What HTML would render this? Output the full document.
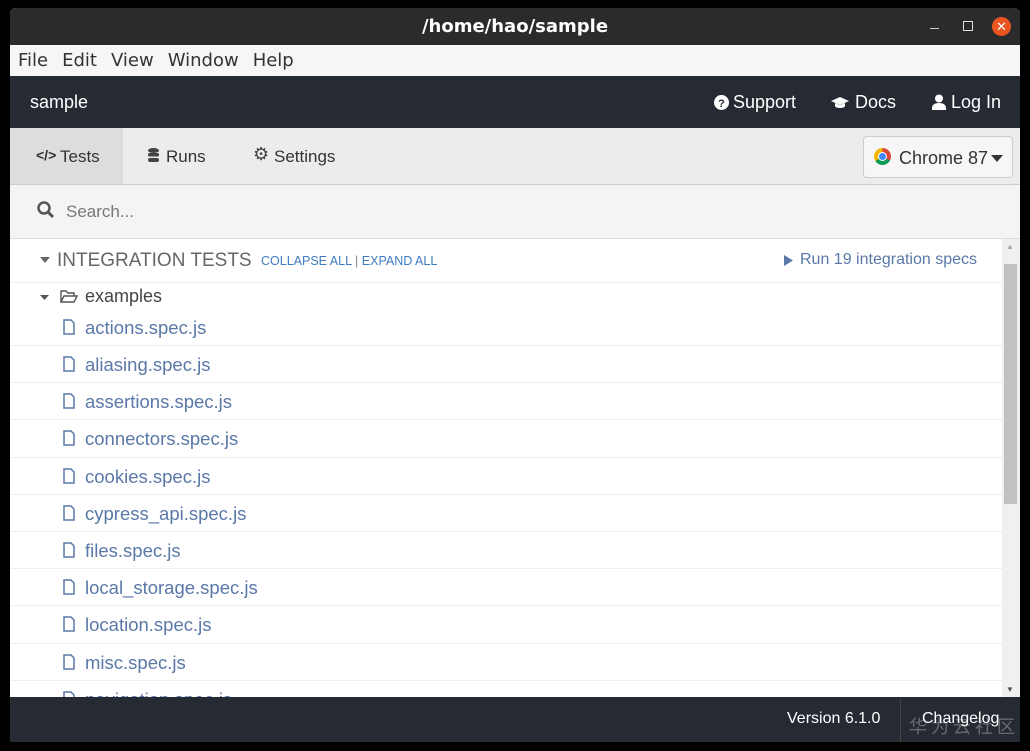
<!DOCTYPE html><html><head><style>
body{margin:0;width:1030px;height:751px;background:#000;font-family:"Liberation Sans",sans-serif;position:relative;overflow:hidden}
.win{position:absolute;left:10px;top:8px;width:1010px;height:734px;background:#fff;border-radius:6px 6px 0 0;overflow:hidden}
.title{height:37px;background:#2b2b2b;color:#fff;font:bold 18px "DejaVu Sans",sans-serif;text-align:center;line-height:37px}
.menu{height:31px;background:#f6f6f6;font:18px "DejaVu Sans",sans-serif;color:#333;line-height:31px;padding-left:8px}
.menu span{margin-right:14px}
.hdr{height:52px;background:#252a33;color:#fff;font-size:18px;line-height:52px;position:relative}
.tabs{height:56px;background:#ececec;border-bottom:1px solid #ccc;position:relative;font-size:17px;color:#333}
.search{height:53px;background:#f4f4f4;border-bottom:1px solid #ddd;position:relative;font-size:17px;color:#777}
.lh{height:43px;border-bottom:1px solid #eee;position:relative;color:#666}
.row{height:36.2px;border-bottom:1px solid #eee;position:relative;font-size:18.5px;color:#5a78a8}
.row span{position:absolute;left:75px;top:8px}
.row svg{position:absolute;left:53px;top:10px}
.foot{position:absolute;left:0;top:689px;width:1010px;height:45px;background:#252a33;color:#fff;font-size:16px}
</style></head><body><div class="win">
<div class="title">/home/hao/sample
<span style="position:absolute;left:920px;top:12px;width:9px;border-top:1px solid #ccc;top:20px"></span>
<span style="position:absolute;left:953px;top:13px;width:8px;height:8px;border:1px solid #ddd"></span>
<span style="position:absolute;left:982px;top:9px;width:19px;height:19px;border-radius:50%;background:#e95420;color:#fff;font:13px sans-serif;line-height:19px">✕</span></div>
<div class="menu"><span>File</span><span>Edit</span><span>View</span><span>Window</span><span>Help</span></div>
<div class="hdr">
<span style="position:absolute;left:20px">sample</span>
<svg style="position:absolute;left:704px;top:19px" width="15" height="15"><circle cx="7.5" cy="7.5" r="7.5" fill="#fff"/><text x="7.5" y="12" font-size="11" font-weight="bold" text-anchor="middle" fill="#252a33" font-family="Liberation Sans">?</text></svg>
<span style="position:absolute;left:723px">Support</span>
<svg style="position:absolute;left:821px;top:20px" width="18" height="13"><path d="M9 1L0 5l9 4 9-4z M4 7v3.5c2 2 8 2 10 0V7l-5 2.3z" fill="#fff"/></svg>
<span style="position:absolute;left:845px">Docs</span>
<svg style="position:absolute;left:922px;top:18px" width="14" height="16"><circle cx="7" cy="4.5" r="4" fill="#fff"/><path d="M0 16v-2c0-3 2.5-5 7-5s7 2 7 5v2z" fill="#fff"/></svg>
<span style="position:absolute;left:941px">Log In</span></div>
<div class="tabs"><div style="position:absolute;left:0;top:0;width:113px;height:56px;background:#ddd"></div>
<span style="position:absolute;left:26px;top:19px;font-weight:bold;font-size:14px">&lt;/&gt;</span><span style="position:absolute;left:50px;top:19px">Tests</span>
<svg style="position:absolute;left:138px;top:20px" width="11" height="14"><ellipse cx="5.5" cy="2.5" rx="5.5" ry="2.5" fill="#444"/><rect x="0" y="5" width="11" height="3.5" rx="1.5" fill="#444"/><rect x="0" y="10" width="11" height="4" rx="2" fill="#444"/></svg>
<span style="position:absolute;left:156px;top:19px">Runs</span>
<span style="position:absolute;left:243px;top:16px;font-size:18px;color:#444">⚙</span><span style="position:absolute;left:264px;top:19px">Settings</span>
<div style="position:absolute;left:853px;top:8px;width:148px;height:40px;background:#f6f6f6;border:1px solid #ccc;border-radius:4px">
<span style="position:absolute;left:10px;top:11px;width:17px;height:17px;border-radius:50%;background:conic-gradient(#db4437 0 33%,#0f9d58 0 66%,#f4b400 0)"></span><span style="position:absolute;left:14px;top:15px;width:7px;height:7px;border-radius:50%;background:#4285f4;border:1.5px solid #fff"></span>
<span style="position:absolute;left:35px;top:11px;font-size:18px">Chrome 87</span><svg style="position:absolute;left:127px;top:18px" width="12" height="7"><path d="M0 0h12L6 7z" fill="#333"/></svg></div></div>
<div class="search"><svg style="position:absolute;left:27px;top:16px" width="18" height="18"><circle cx="7" cy="7" r="5.5" stroke="#555" stroke-width="2.5" fill="none"/><line x1="11" y1="11" x2="16" y2="16" stroke="#555" stroke-width="3"/></svg><span style="position:absolute;left:56px;top:17px">Search...</span></div>
<div style="position:absolute;left:0;top:231px;width:992px">
<div class="lh"><svg style="position:absolute;left:30px;top:18px" width="10" height="6"><path d="M0 0h10L5 6z" fill="#666"/></svg><span style="position:absolute;left:47px;top:11px;font-size:19px">INTEGRATION TESTS</span>
<span style="position:absolute;left:251px;top:15px;font-size:12.5px;color:#3d7bbf">COLLAPSE ALL <span style="color:#888">|</span> EXPAND ALL</span>
<svg style="position:absolute;left:774px;top:16px" width="9" height="11"><path d="M0 0l9 5.5L0 11z" fill="#5a78a8"/></svg>
<span style="position:absolute;left:790px;top:12px;font-size:16px;color:#5a78a8">Run 19 integration specs</span></div>
<div style="height:30px;position:relative;font-size:18px;color:#444"><svg style="position:absolute;left:30px;top:12px" width="9" height="5"><path d="M0 0h9L4.5 5z" fill="#555"/></svg>
<svg style="position:absolute;left:50px;top:7px" width="18" height="13"><path d="M1 12V1h5l2 2h6v3 M1 12l3-6h13l-3 6z" fill="none" stroke="#555" stroke-width="1.4"/></svg><span style="position:absolute;left:75px;top:3px">examples</span></div>
<div class="row" style="height:32px"><svg width="12" height="16" style="top:6px"><path d="M1 1h7l3 3v11H1z" fill="none" stroke="#5a78a8" stroke-width="1.5"/></svg><span style="top:4px">actions.spec.js</span></div>
<div class="row"><svg width="12" height="16"><path d="M1 1h7l3 3v11H1z" fill="none" stroke="#5a78a8" stroke-width="1.5"/></svg><span>aliasing.spec.js</span></div>
<div class="row"><svg width="12" height="16"><path d="M1 1h7l3 3v11H1z" fill="none" stroke="#5a78a8" stroke-width="1.5"/></svg><span>assertions.spec.js</span></div>
<div class="row"><svg width="12" height="16"><path d="M1 1h7l3 3v11H1z" fill="none" stroke="#5a78a8" stroke-width="1.5"/></svg><span>connectors.spec.js</span></div>
<div class="row"><svg width="12" height="16"><path d="M1 1h7l3 3v11H1z" fill="none" stroke="#5a78a8" stroke-width="1.5"/></svg><span>cookies.spec.js</span></div>
<div class="row"><svg width="12" height="16"><path d="M1 1h7l3 3v11H1z" fill="none" stroke="#5a78a8" stroke-width="1.5"/></svg><span>cypress_api.spec.js</span></div>
<div class="row"><svg width="12" height="16"><path d="M1 1h7l3 3v11H1z" fill="none" stroke="#5a78a8" stroke-width="1.5"/></svg><span>files.spec.js</span></div>
<div class="row"><svg width="12" height="16"><path d="M1 1h7l3 3v11H1z" fill="none" stroke="#5a78a8" stroke-width="1.5"/></svg><span>local_storage.spec.js</span></div>
<div class="row"><svg width="12" height="16"><path d="M1 1h7l3 3v11H1z" fill="none" stroke="#5a78a8" stroke-width="1.5"/></svg><span>location.spec.js</span></div>
<div class="row"><svg width="12" height="16"><path d="M1 1h7l3 3v11H1z" fill="none" stroke="#5a78a8" stroke-width="1.5"/></svg><span>misc.spec.js</span></div>
<div class="row"><svg width="12" height="16"><path d="M1 1h7l3 3v11H1z" fill="none" stroke="#5a78a8" stroke-width="1.5"/></svg><span>navigation.spec.js</span></div>
</div>
<div style="position:absolute;left:992px;top:231px;width:18px;height:458px;background:#f0f0f0"><div style="position:absolute;left:2px;top:25px;width:13px;height:240px;background:#c1c1c1"></div><span style="position:absolute;left:4px;top:3px;font-size:8px;color:#aaa">▲</span><span style="position:absolute;left:4px;bottom:3px;font-size:8px;color:#555">▼</span></div>
<div class="foot"><span style="position:absolute;left:777px;top:13px">Version 6.1.0</span><div style="position:absolute;left:890px;top:2px;height:43px;border-left:1px solid #444"></div><span style="position:absolute;left:899px;top:16px;color:rgba(255,255,255,.3);font:18px 'Noto Sans CJK SC',sans-serif;letter-spacing:4px;white-space:nowrap">华为云社区</span><span style="position:absolute;left:912px;top:13px">Changelog</span></div>
</div></body></html>
